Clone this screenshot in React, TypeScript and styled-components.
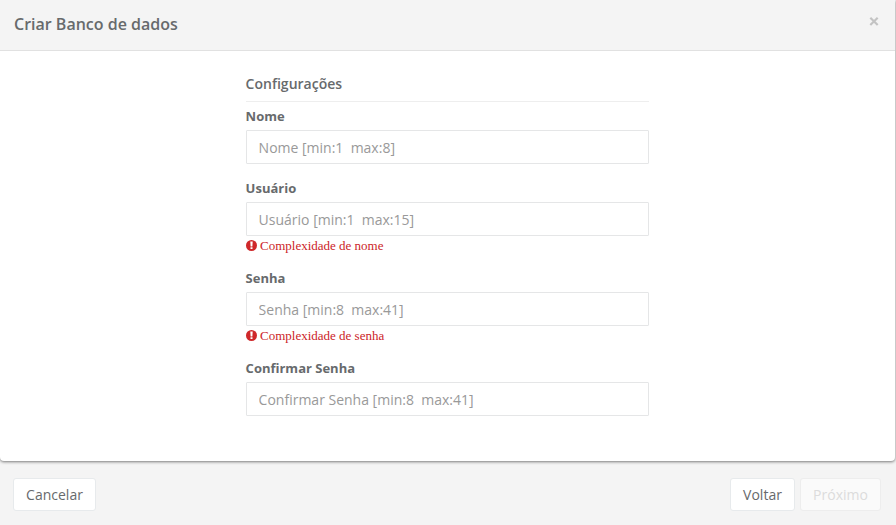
import React from "react";
import styled, { createGlobalStyle } from "styled-components";

const GlobalStyle = createGlobalStyle`
  *, *::before, *::after { box-sizing: border-box; }
  html, body { margin: 0; background: #f4f4f4; }
  body, input, button {
    font-family: "Open Sans", "Noto Sans", sans-serif;
    color: #676a6c;
  }
`;

const Page = styled.main`
  display: flex;
  flex-direction: column;
  width: 100%;
  height: 525px;
  overflow: hidden;
  background: #f4f4f4;
`;

const Dialog = styled.section`
  display: flex;
  flex-direction: column;
  height: 461px;
  margin-right: 1px;
  background: #fff;
  border-radius: 0 0 4px 4px;
  box-shadow: 0 1px 3px rgba(0, 0, 0, 0.5);
`;

const Header = styled.header`
  display: flex;
  justify-content: space-between;
  height: 51px;
  padding: 13px 15px 0 14px;
  background: #f4f4f4;
  border-bottom: 1px solid #e1e1e1;
`;

const Title = styled.h1`
  margin: 0;
  font-size: 16px;
  font-weight: 600;
  line-height: 22px;
`;

const CloseButton = styled.button`
  display: flex;
  width: 11px;
  height: 11px;
  margin-top: 3px;
  padding: 0;
  border: 0;
  background: none;
`;

const Form = styled.form`
  display: flex;
  flex-direction: column;
  width: 403px;
  margin: 23px 0 0 245.6px;
`;

const SectionTitle = styled.h2`
  height: 28px;
  margin: 0 0 5px;
  border-bottom: 1px solid #eee;
  font-size: 14px;
  font-weight: 600;
  line-height: 20px;
`;

const Field = styled.div`
  display: flex;
  flex-direction: column;
  margin-bottom: 15px;
`;

const Label = styled.label`
  height: 23px;
  font-size: 13px;
  font-weight: 700;
  line-height: 19px;
`;

const Input = styled.input`
  width: 100%;
  height: 34px;
  padding: 6px 12px;
  border: 1px solid #e5e6e7;
  border-radius: 1px;
  background: #fff;
  font-size: 14px;
  outline: none;

  &::placeholder {
    color: #999;
    opacity: 1;
  }
`;

const ErrorMessage = styled.div`
  display: flex;
  align-items: center;
  gap: 3.4px;
  height: 18px;
  color: #cc2428;
  font-family: "Liberation Serif", serif;
  font-size: 13px;
  line-height: 18px;
`;

const ErrorText = styled.span`
  padding-top: 2px;
`;

const Footer = styled.footer`
  display: flex;
  justify-content: space-between;
  padding: 17px 15px 0 13px;
`;

const ButtonGroup = styled.div`
  display: flex;
  gap: 5px;
`;

const Button = styled.button<{ $width: number }>`
  width: ${({ $width }) => $width}px;
  height: 33px;
  padding: 0;
  border: 1px solid #e7eaec;
  border-radius: 3px;
  background: #fff;
  font-size: 14px;
  line-height: 20px;

  &:disabled {
    background: #fafafa;
    border-color: #ededed;
    color: #dcdcdc;
  }
`;

const CloseIcon = () => (
  <svg width="11" height="11" viewBox="0 0 11 11" aria-hidden="true">
    <path d="M1.3 1.8 8.7 9M8.7 1.8 1.3 9" stroke="#c3c3c3" strokeWidth="2.2" fill="none" />
  </svg>
);

const AlertIcon = () => (
  <svg width="11" height="11" viewBox="0 0 11 11" aria-hidden="true">
    <circle cx="5.5" cy="5.5" r="5.5" fill="#cf282a" />
    <path d="M4.3 1.6h2.4L6.4 6.6H4.6zM4.5 7.3h2v1.8h-2z" fill="#fff" />
  </svg>
);

type FieldData = {
  id: string;
  label: string;
  placeholder: string;
  error?: string;
  type: "text" | "password";
};

const fields: FieldData[] = [
  { id: "nome", label: "Nome", placeholder: "Nome [min:1  max:8]", type: "text" },
  { id: "usuario", label: "Usuário", placeholder: "Usuário [min:1  max:15]", error: "Complexidade de nome", type: "text" },
  { id: "senha", label: "Senha", placeholder: "Senha [min:8  max:41]", error: "Complexidade de senha", type: "password" },
  { id: "confirmar", label: "Confirmar Senha", placeholder: "Confirmar Senha [min:8  max:41]", type: "password" },
];

export default function App() {
  return (
    <Page>
      <GlobalStyle />
      <Dialog>
        <Header>
          <Title>Criar Banco de dados</Title>
          <CloseButton type="button" aria-label="Fechar"><CloseIcon /></CloseButton>
        </Header>
        <Form>
          <SectionTitle>Configurações</SectionTitle>
          {fields.map((field) => (
            <Field key={field.id}>
              <Label htmlFor={field.id}>{field.label}</Label>
              <Input id={field.id} type={field.type} placeholder={field.placeholder} />
              {field.error && (
                <ErrorMessage><AlertIcon /><ErrorText>{field.error}</ErrorText></ErrorMessage>
              )}
            </Field>
          ))}
        </Form>
      </Dialog>
      <Footer>
        <Button type="button" $width={83}>Cancelar</Button>
        <ButtonGroup>
          <Button type="button" $width={65}>Voltar</Button>
          <Button type="button" $width={81} disabled>Próximo</Button>
        </ButtonGroup>
      </Footer>
    </Page>
  );
}
